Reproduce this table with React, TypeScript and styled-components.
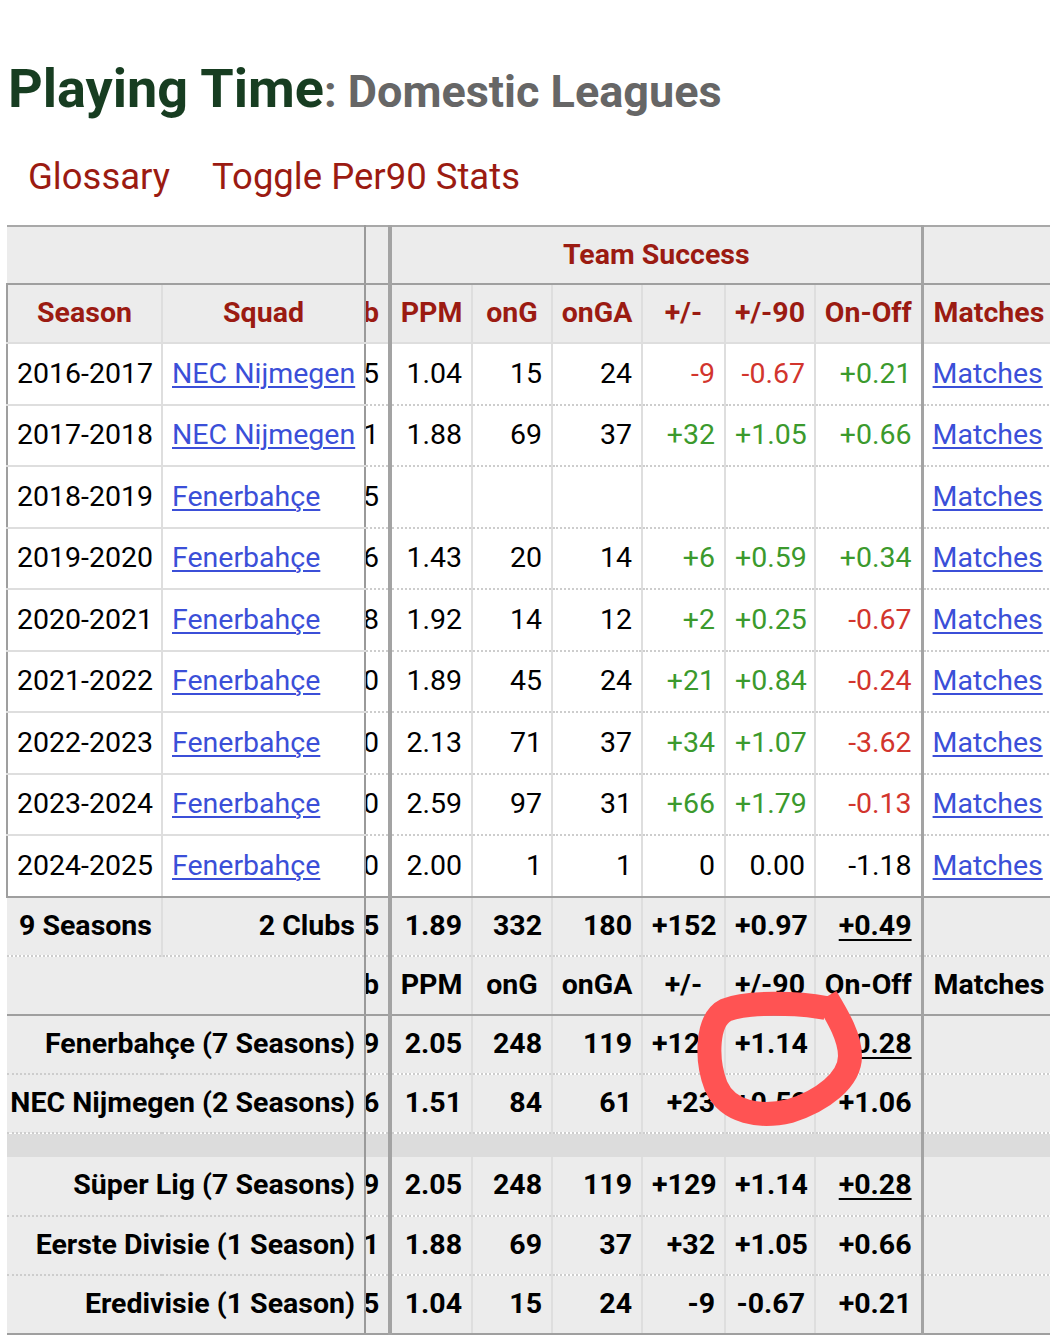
import React from "react";
import styled, { createGlobalStyle, css } from "styled-components";

const GlobalStyle = createGlobalStyle`
  html, body { margin: 0; padding: 0; background: #ffffff; }
  body {
    font-family: Roboto, "Noto Sans", "Liberation Sans", sans-serif;
    overflow: hidden;
  }
`;

const C = {
  green: "#173d21",
  grey: "#666666",
  head: "#9b1b12",
  link: "#3b4fd8",
  pos: "#3b9a2d",
  neg: "#d2352d",
  band: "#ececec",
  gap: "#dcdcdc",
  light: "#dedede",
  dark: "#9f9f9f",
  dot: "#cdcdcd",
};

const Page = styled.div`
  position: relative;
  width: 1050px;
  min-height: 1342px;
  padding-left: 6px;
  box-sizing: border-box;
  overflow: hidden;
`;

const Title = styled.h2`
  margin: 58px 0 0 2px;
  font-size: 54px;
  line-height: 61px;
  font-weight: 700;
  color: ${C.green};
  white-space: nowrap;
`;

const TitleSub = styled.span`
  font-size: 45px;
  color: ${C.grey};
`;

const Links = styled.nav`
  display: flex;
  gap: 42px;
  margin: 33px 0 0 22px;
  font-size: 36.5px;
  line-height: 43px;
`;

const TextLink = styled.a`
  color: ${C.head};
  text-decoration: none;
`;

const Table = styled.table`
  margin-top: 27px;
  border-collapse: collapse;
  table-layout: fixed;
  width: 1053px;
  font-size: 28.5px;
  line-height: 1;
  color: #000;
  border-top: 2px solid #a8a8a8;
`;

type Edge = "light" | "sticky" | "group" | "match" | "none";
const edgeBorder: Record<Edge, string> = {
  light: `2px solid ${C.light}`,
  sticky: "2px solid #9a9a9a",
  group: "4px solid #a3a3a3",
  match: "3px solid #a3a3a3",
  none: "none",
};

const Col = styled.col<{ $w: number; $edge: Edge }>`
  width: ${(p) => p.$w}px;
  border-right: ${(p) => edgeBorder[p.$edge]};
`;

type RowKind = "band" | "head" | "data" | "total" | "subhead" | "sum" | "gap";
type Bottom = "dotted" | "strong" | "light" | "none";

const rowHeight: Record<RowKind, number> = {
  band: 58,
  head: 59,
  data: 61.5,
  total: 59,
  subhead: 59,
  sum: 59,
  gap: 24,
};

const bottomBorder: Record<Bottom, string> = {
  dotted: `2px dotted ${C.dot}`,
  strong: `2px solid ${C.dark}`,
  light: `2px solid ${C.light}`,
  none: "none",
};

const Row = styled.tr<{ $kind: RowKind; $bottom: Bottom }>`
  height: ${(p) => rowHeight[p.$kind]}px;
  background: ${(p) =>
    p.$kind === "data" ? "#ffffff" : p.$kind === "gap" ? C.gap : C.band};
  & > td,
  & > th {
    border-bottom: ${(p) => bottomBorder[p.$bottom]};
  }
`;

type Tone = "pos" | "neg" | "plain";

const cellBase = css`
  padding: 0 9px;
  white-space: nowrap;
  overflow: hidden;
  vertical-align: middle;
`;

const Cell = styled.td<{
  $align?: "left" | "right" | "center";
  $bold?: boolean;
  $tone?: Tone;
  $sticky?: boolean;
  $edgeLeft?: boolean;
  $label?: boolean;
  $indent?: number;
}>`
  ${cellBase}
  text-align: ${(p) => p.$align ?? "right"};
  font-weight: ${(p) => (p.$bold ? 700 : 400)};
  color: ${(p) =>
    p.$tone === "pos" ? C.pos : p.$tone === "neg" ? C.neg : "#000"};
  ${(p) =>
    p.$label &&
    css`
      overflow: visible;
      padding: 0 9px 0 0;
    `}
  ${(p) =>
    p.$indent !== undefined &&
    css`
      padding-left: ${p.$indent}px;
    `}
  ${(p) =>
    p.$edgeLeft &&
    css`
      border-left: 2px solid ${C.dark};
    `}
  ${(p) =>
    p.$sticky &&
    css`
      && {
        border-bottom-style: solid;
        border-bottom-color: ${C.light};
      }
    `}
`;

const PeekCell = styled.td<{ $bold?: boolean; $head?: boolean }>`
  padding: 0;
  overflow: hidden;
  white-space: nowrap;
  text-align: left;
  text-indent: -3px;
  font-weight: ${(p) => (p.$bold ? 700 : 400)};
  color: ${(p) => (p.$head ? C.head : "#000")};
`;

const HeadCell = styled.th<{ $dark?: boolean; $edgeLeft?: boolean }>`
  ${cellBase}
  padding: 0 4px;
  text-align: center;
  font-weight: 700;
  color: ${(p) => (p.$dark ? "#000" : C.head)};
  ${(p) =>
    p.$edgeLeft &&
    css`
      border-left: 2px solid ${C.dark};
    `}
`;

const LeftHead = styled(HeadCell)`
  text-align: left;
  padding-left: 10px;
`;

const TeamLink = styled.a`
  color: ${C.link};
  text-decoration: underline;
  text-decoration-thickness: 2px;
  text-underline-offset: 3px;
`;

const Under = styled.span`
  text-decoration: underline;
  text-decoration-thickness: 2px;
  text-underline-offset: 4px;
`;

const Overlay = styled.svg`
  position: absolute;
  left: 0;
  top: 0;
  pointer-events: none;
`;

type Val = [string, Tone];

interface SeasonRow {
  season: string;
  squad: string;
  peek: string;
  ppm: string;
  ong: string;
  onga: string;
  pm: Val;
  pm90: Val;
  onoff: Val;
}

const E: Val = ["", "plain"];

const seasons: SeasonRow[] = [
  { season: "2016-2017", squad: "NEC Nijmegen", peek: "5", ppm: "1.04", ong: "15", onga: "24", pm: ["-9", "neg"], pm90: ["-0.67", "neg"], onoff: ["+0.21", "pos"] },
  { season: "2017-2018", squad: "NEC Nijmegen", peek: "1", ppm: "1.88", ong: "69", onga: "37", pm: ["+32", "pos"], pm90: ["+1.05", "pos"], onoff: ["+0.66", "pos"] },
  { season: "2018-2019", squad: "Fenerbahçe", peek: "5", ppm: "", ong: "", onga: "", pm: E, pm90: E, onoff: E },
  { season: "2019-2020", squad: "Fenerbahçe", peek: "6", ppm: "1.43", ong: "20", onga: "14", pm: ["+6", "pos"], pm90: ["+0.59", "pos"], onoff: ["+0.34", "pos"] },
  { season: "2020-2021", squad: "Fenerbahçe", peek: "8", ppm: "1.92", ong: "14", onga: "12", pm: ["+2", "pos"], pm90: ["+0.25", "pos"], onoff: ["-0.67", "neg"] },
  { season: "2021-2022", squad: "Fenerbahçe", peek: "0", ppm: "1.89", ong: "45", onga: "24", pm: ["+21", "pos"], pm90: ["+0.84", "pos"], onoff: ["-0.24", "neg"] },
  { season: "2022-2023", squad: "Fenerbahçe", peek: "0", ppm: "2.13", ong: "71", onga: "37", pm: ["+34", "pos"], pm90: ["+1.07", "pos"], onoff: ["-3.62", "neg"] },
  { season: "2023-2024", squad: "Fenerbahçe", peek: "0", ppm: "2.59", ong: "97", onga: "31", pm: ["+66", "pos"], pm90: ["+1.79", "pos"], onoff: ["-0.13", "neg"] },
  { season: "2024-2025", squad: "Fenerbahçe", peek: "0", ppm: "2.00", ong: "1", onga: "1", pm: ["0", "plain"], pm90: ["0.00", "plain"], onoff: ["-1.18", "plain"] },
];

interface SumRow {
  label: string;
  peek: string;
  ppm: string;
  ong: string;
  onga: string;
  pm: string;
  pm90: string;
  onoff: string;
  underline?: boolean;
  bottom: Bottom;
}

const clubRows: SumRow[] = [
  { label: "Fenerbahçe (7 Seasons)", peek: "9", ppm: "2.05", ong: "248", onga: "119", pm: "+129", pm90: "+1.14", onoff: "+0.28", underline: true, bottom: "dotted" },
  { label: "NEC Nijmegen (2 Seasons)", peek: "6", ppm: "1.51", ong: "84", onga: "61", pm: "+23", pm90: "+0.52", onoff: "+1.06", bottom: "dotted" },
];

const leagueRows: SumRow[] = [
  { label: "Süper Lig (7 Seasons)", peek: "9", ppm: "2.05", ong: "248", onga: "119", pm: "+129", pm90: "+1.14", onoff: "+0.28", underline: true, bottom: "dotted" },
  { label: "Eerste Divisie (1 Season)", peek: "1", ppm: "1.88", ong: "69", onga: "37", pm: "+32", pm90: "+1.05", onoff: "+0.66", bottom: "dotted" },
  { label: "Eredivisie (1 Season)", peek: "5", ppm: "1.04", ong: "15", onga: "24", pm: "-9", pm90: "-0.67", onoff: "+0.21", bottom: "strong" },
];

const statHeads = ["PPM", "onG", "onGA", "+/-", "+/-90", "On-Off", "Matches"];

const SummaryRow = ({ r }: { r: SumRow }) => (
  <Row $kind="sum" $bottom={r.bottom}>
    <Cell colSpan={2} $bold $label>
      {r.label}
    </Cell>
    <PeekCell $bold>{r.peek}</PeekCell>
    <Cell $bold>{r.ppm}</Cell>
    <Cell $bold>{r.ong}</Cell>
    <Cell $bold>{r.onga}</Cell>
    <Cell $bold>{r.pm}</Cell>
    <Cell $bold>{r.pm90}</Cell>
    <Cell $bold>{r.underline ? <Under>{r.onoff}</Under> : r.onoff}</Cell>
    <Cell />
  </Row>
);

export default function App() {
  return (
    <>
      <GlobalStyle />
      <Page>
        <Title>
          Playing Time<TitleSub>: Domestic Leagues</TitleSub>
        </Title>
        <Links>
          <TextLink href="#glossary">Glossary</TextLink>
          <TextLink href="#per90">Toggle Per90 Stats</TextLink>
        </Links>

        <Table>
          <colgroup>
            <Col $w={155} $edge="light" />
            <Col $w={203} $edge="sticky" />
            <Col $w={25} $edge="group" />
            <Col $w={82} $edge="light" />
            <Col $w={80} $edge="light" />
            <Col $w={90} $edge="light" />
            <Col $w={83} $edge="light" />
            <Col $w={90} $edge="light" />
            <Col $w={107} $edge="match" />
            <Col $w={138} $edge="none" />
          </colgroup>
          <thead>
            <Row $kind="band" $bottom="strong">
              <HeadCell colSpan={2} />
              <HeadCell />
              <HeadCell colSpan={6}>Team Success</HeadCell>
              <HeadCell />
            </Row>
            <Row $kind="head" $bottom="light">
              <HeadCell $edgeLeft>Season</HeadCell>
              <HeadCell>Squad</HeadCell>
              <PeekCell $bold $head>
                b
              </PeekCell>
              {statHeads.map((h) =>
                h === "Matches" ? (
                  <LeftHead key={h}>{h}</LeftHead>
                ) : (
                  <HeadCell key={h}>{h}</HeadCell>
                )
              )}
            </Row>
          </thead>
          <tbody>
            {seasons.map((s, i) => (
              <Row
                key={s.season}
                $kind="data"
                $bottom={i === seasons.length - 1 ? "strong" : "dotted"}
              >
                <Cell $align="left" $edgeLeft $sticky={i !== seasons.length - 1}>
                  {s.season}
                </Cell>
                <Cell $align="left" $sticky={i !== seasons.length - 1}>
                  <TeamLink href="#squad">{s.squad}</TeamLink>
                </Cell>
                <PeekCell>{s.peek}</PeekCell>
                <Cell>{s.ppm}</Cell>
                <Cell>{s.ong}</Cell>
                <Cell>{s.onga}</Cell>
                <Cell $tone={s.pm[1]}>{s.pm[0]}</Cell>
                <Cell $tone={s.pm90[1]}>{s.pm90[0]}</Cell>
                <Cell $tone={s.onoff[1]}>{s.onoff[0]}</Cell>
                <Cell $align="left">
                  <TeamLink href="#matches">Matches</TeamLink>
                </Cell>
              </Row>
            ))}
          </tbody>
          <tfoot>
            <Row $kind="total" $bottom="dotted">
              <Cell $align="left" $bold $indent={12}>
                9 Seasons
              </Cell>
              <Cell $bold>2 Clubs</Cell>
              <PeekCell $bold>5</PeekCell>
              <Cell $bold>1.89</Cell>
              <Cell $bold>332</Cell>
              <Cell $bold>180</Cell>
              <Cell $bold>+152</Cell>
              <Cell $bold>+0.97</Cell>
              <Cell $bold>
                <Under>+0.49</Under>
              </Cell>
              <Cell />
            </Row>
            <Row $kind="subhead" $bottom="strong">
              <HeadCell colSpan={2} $dark />
              <PeekCell $bold>b</PeekCell>
              {statHeads.map((h) =>
                h === "Matches" ? (
                  <LeftHead key={h} $dark>
                    {h}
                  </LeftHead>
                ) : (
                  <HeadCell key={h} $dark>
                    {h}
                  </HeadCell>
                )
              )}
            </Row>
            {clubRows.map((r) => (
              <SummaryRow key={r.label} r={r} />
            ))}
            <Row $kind="gap" $bottom="none">
              <Cell colSpan={2} />
              <PeekCell />
              <Cell colSpan={6} />
              <Cell />
            </Row>
            {leagueRows.map((r) => (
              <SummaryRow key={r.label} r={r} />
            ))}
          </tfoot>
        </Table>

        <Overlay width={1050} height={1342} viewBox="0 0 1050 1342">
          <path
            d="M 826 1008 C 800 1003 748 1001 726 1010 C 706 1020 706 1060 716 1086 C 728 1113 760 1118 790 1111 C 822 1101 850 1080 850 1056 C 850 1036 836 1014 826 997"
            fill="none"
            stroke="#ff5353"
            strokeWidth={24}
            strokeLinejoin="round"
          />
        </Overlay>
      </Page>
    </>
  );
}
